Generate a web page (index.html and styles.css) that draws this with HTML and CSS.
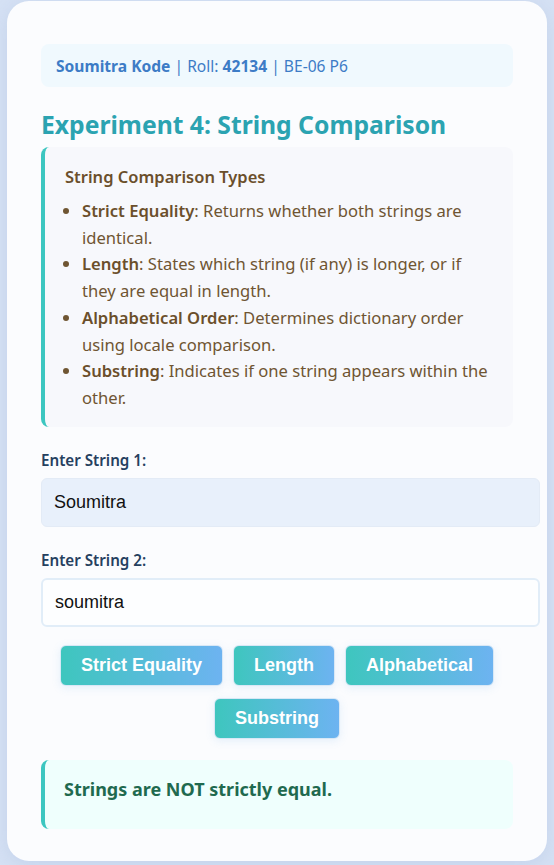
FILE: index.html
```html
<!DOCTYPE html>
<html lang="en">
<head>
<meta charset="utf-8">
<title>Experiment 4: String Comparison</title>
<link rel="stylesheet" href="styles.css">
</head>
<body>
<div class="card">
  <div class="student"><span class="student-text"><b>Soumitra Kode</b> | Roll: <b>42134</b> | BE-06 P6</span></div>
  <h2 class="title">Experiment 4: String Comparison</h2>
  <div class="info">
    <h3 class="info-title">String Comparison Types</h3>
    <ul class="info-list">
      <li><b>Strict Equality</b>: Returns whether both strings are identical.</li>
      <li><b>Length</b>: States which string (if any) is longer, or if they are equal in length.</li>
      <li><b>Alphabetical Order</b>: Determines dictionary order using locale comparison.</li>
      <li><b>Substring</b>: Indicates if one string appears within the other.</li>
    </ul>
  </div>
  <label class="label" for="s1">Enter String 1:</label>
  <input class="field field-filled" id="s1" type="text" value="Soumitra">
  <label class="label" for="s2">Enter String 2:</label>
  <input class="field" id="s2" type="text" value="soumitra">
  <div class="buttons">
    <button class="btn">Strict Equality</button>
    <button class="btn">Length</button>
    <button class="btn">Alphabetical</button>
    <button class="btn">Substring</button>
  </div>
  <div class="result">Strings are NOT strictly equal.</div>
</div>
</body>
</html>
```
FILE: styles.css
```css
html, body {
  margin: 0;
  padding: 0;
}
body {
  background: #d5e1f4;
  font-family: "Noto Sans", "Open Sans", sans-serif;
  padding: 1px 7px 4px;
  height: 865px;
  box-sizing: border-box;
}
.card {
  background: #fbfcfe;
  border-radius: 22px;
  padding: 43px 34px 32px;
  height: 860px;
  box-sizing: border-box;
  box-shadow: 0 4px 18px rgba(120, 150, 200, 0.18);
}
.student {
  background: #f0f9fe;
  border-radius: 8px;
  height: 43px;
  box-sizing: border-box;
  padding: 0 15px;
  display: flex;
  align-items: center;
  font-size: 15.6px;
  color: #3d7cc6;
}
.student b {
  font-weight: 700;
}
.title {
  margin: 22px 0 6px;
  font-size: 24.7px;
  font-weight: 700;
  color: #2ba3b1;
  line-height: 32px;
}
.info {
  background: #f7f8fc;
  border-left: 4px solid #3cc6c0;
  border-radius: 8px;
  padding: 17px 16px 15px 20px;
}
.info-title {
  margin: 0 0 8px;
  font-size: 16.5px;
  font-weight: 600;
  color: #6b4f2b;
  line-height: 26px;
}
.info-list {
  margin: 0;
  padding-left: 17px;
  color: #6f5532;
  font-size: 16.6px;
  line-height: 26.7px;
}
.info-list b {
  color: #6b4f2b;
  font-weight: 600;
}
.label {
  display: block;
  margin: 23px 0 8px;
  font-size: 15.2px;
  font-weight: 600;
  color: #25405f;
  line-height: 20px;
}
.field {
  display: block;
  box-sizing: border-box;
  width: 499px;
  height: 49px;
  padding: 0 12px;
  border: 2px solid #e1edf8;
  border-radius: 6px;
  background: #fdfeff;
  font-family: "Liberation Sans", Arial, sans-serif;
  font-size: 18px;
  color: #111;
  outline: none;
}
.field-filled {
  background: #e8f0fb;
  border: 1.5px solid #e3ebf6;
}
.field + .label {
  margin-top: 23px;
}
.buttons {
  display: flex;
  flex-wrap: wrap;
  justify-content: center;
  gap: 12px 10px;
  margin: 18px 0 21px;
}
.btn {
  height: 41px;
  padding: 0 20px;
  border: 1px solid #d8e8f6;
  border-radius: 6px;
  background: linear-gradient(90deg, #3ec6be 0%, #6db3f1 100%);
  color: #fff;
  font-family: "Liberation Sans", Arial, sans-serif;
  font-weight: 700;
  font-size: 18px;
  box-shadow: 0 2px 8px rgba(100, 170, 230, 0.15);
}
.result {
  background: #effffd;
  border-left: 4px solid #3cc6c0;
  border-radius: 8px;
  height: 69px;
  box-sizing: border-box;
  padding: 17px 19px 0;
  font-size: 18px;
  line-height: 24px;
  font-weight: 700;
  color: #1f6a4f;
}
```
